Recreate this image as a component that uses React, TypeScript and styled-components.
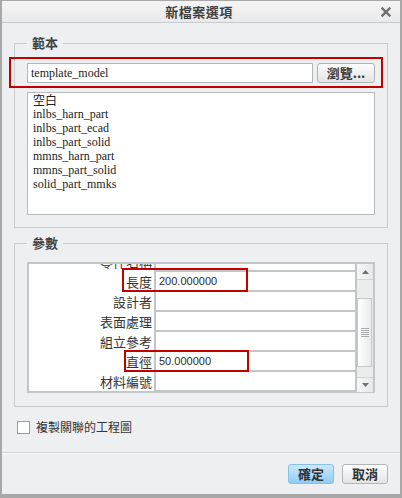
import React from "react";
import styled, { createGlobalStyle } from "styled-components";

const GlobalStyle = createGlobalStyle`
  html, body { margin: 0; padding: 0; background: #ffffff; }
  body { font-family: "Noto Sans CJK TC", "Liberation Sans", sans-serif; }
  * { box-sizing: border-box; }
`;

const Window = styled.div`
  width: 402px;
  height: 498px;
  display: flex;
  flex-direction: column;
  background: #eeeff1;
  border-style: solid;
  border-color: #a8a8a8;
  border-width: 1px 2px 4px 2px;
  overflow: hidden;
`;

const TitleBar = styled.div`
  flex: none;
  height: 22px;
  display: grid;
  grid-template-columns: 1fr auto 1fr;
  align-items: center;
  background: linear-gradient(#f4f4f5, #e9eaeb);
  border-bottom: 1px solid #c9cacc;
`;

const Title = styled.div`
  grid-column: 2;
  font: 700 13px/16px "Noto Sans CJK TC", sans-serif;
  color: #3e3e3e;
  letter-spacing: 0.5px;
  margin-right: 4px;
`;

const CloseButton = styled.div`
  grid-column: 3;
  justify-self: end;
  margin-right: 9px;
  width: 10px;
  height: 10px;
  display: flex;
`;

const Body = styled.div`
  flex: 1;
  display: flex;
  flex-direction: column;
  padding: 12px 12px 0;
`;

const Group = styled.fieldset<{ $padTop: number; $padBottom: number; $gapTop?: number }>`
  margin: ${(p) => p.$gapTop ?? 0}px 0 0;
  min-width: 0;
  border: 1px solid #c9cacc;
  padding: ${(p) => p.$padTop}px 12px ${(p) => p.$padBottom}px;
`;

const Legend = styled.legend`
  padding: 0 5px;
  font: 700 13px/16px "Noto Sans CJK TC", sans-serif;
  color: #404040;
`;

const TemplateRow = styled.div`
  position: relative;
  display: flex;
  gap: 4px;
  height: 20px;
`;

const Highlight = styled.div<{ $l: number; $t: number; $w?: number; $h?: number; $r?: number; $b?: number }>`
  position: absolute;
  left: ${(p) => p.$l}px;
  top: ${(p) => p.$t}px;
  ${(p) => (p.$w !== undefined ? `width: ${p.$w}px;` : `right: ${p.$r}px;`)}
  ${(p) => (p.$h !== undefined ? `height: ${p.$h}px;` : `bottom: ${p.$b}px;`)}
  border: 2px solid #c20000;
  pointer-events: none;
  z-index: 2;
`;

const PathInput = styled.div`
  flex: 1;
  height: 20px;
  border: 1px solid #b3b4b6;
  background: #ffffff;
  padding-left: 3px;
  font: 12px/18px "Liberation Serif", serif;
  color: #222222;
`;

const BrowseButton = styled.div`
  width: 58px;
  height: 20px;
  border: 1px solid #b2b2b2;
  border-radius: 3px;
  background: linear-gradient(#fdfdfd, #e2e3e4);
  display: flex;
  align-items: center;
  justify-content: center;
  font: 700 13px/16px "Noto Sans CJK TC", sans-serif;
  color: #3a3a3a;
`;

const TemplateList = styled.ul`
  margin: 9px 0 0;
  padding: 0 0 0 5px;
  list-style: none;
  height: 123px;
  border: 1px solid #b9babc;
  background: #ffffff;
  font: 12px/14px "Liberation Serif", "Noto Sans CJK TC", serif;
  color: #222222;
`;

const ListItem = styled.li<{ $cjk?: boolean }>`
  height: 14px;
  white-space: nowrap;
  ${(p) => (p.$cjk ? `font: 12px/14px "Noto Sans CJK TC", sans-serif;` : "")}
`;

const ParamTable = styled.div`
  display: flex;
  height: 131px;
  border: 2px solid #c4c5c7;
  background: #ffffff;
`;

const ParamBody = styled.div`
  flex: 1;
  position: relative;
  overflow: hidden;
`;

const ParamRows = styled.div`
  margin-top: -12px;
`;

const ParamRow = styled.div`
  position: relative;
  display: grid;
  grid-template-columns: 125px 1fr;
  height: 20px;
`;

const ParamLabel = styled.div`
  text-align: right;
  padding-right: 2px;
  font: 13px/19px "Noto Sans CJK TC", sans-serif;
  color: #333333;
  white-space: nowrap;
`;

const ParamValue = styled.div`
  border-left: 2px solid #c4c5c7;
  border-bottom: 2px solid #c4c5c7;
  padding-left: 3px;
  font: 11px/18px "Liberation Sans", sans-serif;
  color: #2a2a2a;
`;

const ScrollBar = styled.div`
  flex: none;
  width: 18px;
  border-left: 2px solid #c4c5c7;
  background: #ebecec;
  display: flex;
  flex-direction: column;
`;

const ScrollButton = styled.div<{ $down?: boolean }>`
  flex: none;
  height: ${(p) => (p.$down ? 15 : 16)}px;
  display: flex;
  align-items: center;
  justify-content: center;
  background: linear-gradient(90deg, #f6f6f6, #e8e8e9);
  ${(p) => (p.$down ? "border-top: 1px solid #d2d3d4;" : "border-bottom: 1px solid #d2d3d4;")}
`;

const ScrollTrack = styled.div<{ $h: number }>`
  flex: none;
  height: ${(p) => p.$h}px;
`;

const ScrollThumb = styled.div`
  flex: none;
  height: 69px;
  margin-right: 1px;
  border: 1px solid #c6c7c9;
  background: linear-gradient(90deg, #ffffff, #e9eaeb);
  display: flex;
  align-items: center;
  justify-content: center;
`;

const CheckRow = styled.label`
  display: flex;
  align-items: center;
  gap: 6px;
  margin: 13px 0 0 3px;
  font: 12px/14px "Noto Sans CJK TC", sans-serif;
  color: #333333;
`;

const CheckBox = styled.span`
  width: 13px;
  height: 13px;
  border: 1px solid #9c9c9c;
  background: #ffffff;
`;

const Footer = styled.div`
  flex: none;
  height: 42px;
  display: flex;
  justify-content: flex-end;
  align-items: flex-start;
  gap: 8px;
  padding: 11px 12px 0 0;
  border-top: 1px solid #d3d4d6;
  box-shadow: inset 0 1px 0 #f8f8f9;
`;

const DialogButton = styled.div<{ $primary?: boolean }>`
  width: 46px;
  height: 20px;
  border-radius: 3px;
  border: 1px solid ${(p) => (p.$primary ? "#86c1ea" : "#b4b5b7")};
  background: ${(p) =>
    p.$primary ? "linear-gradient(#cbe8fc, #8fcdf6)" : "linear-gradient(#fdfdfd, #e3e4e5)"};
  display: flex;
  align-items: center;
  justify-content: center;
  font: 700 13px/16px "Noto Sans CJK TC", sans-serif;
  color: #333333;
`;

const templates = [
  "inlbs_harn_part",
  "inlbs_part_ecad",
  "inlbs_part_solid",
  "mmns_harn_part",
  "mmns_part_solid",
  "solid_part_mmks",
];

type Param = { label: string; value: string; mark?: { l: number; t: number; w: number; h: number } };

const params: Param[] = [
  { label: "零件名稱", value: "" },
  { label: "長度", value: "200.000000", mark: { l: 93, t: -4, w: 126, h: 24 } },
  { label: "設計者", value: "" },
  { label: "表面處理", value: "" },
  { label: "組立參考", value: "" },
  { label: "直徑", value: "50.000000", mark: { l: 95, t: -2, w: 125, h: 22 } },
  { label: "材料編號", value: "" },
];

const Arrow = ({ down }: { down?: boolean }) => (
  <svg width="7" height="4" viewBox="0 0 7 4">
    <polygon points={down ? "0,0 7,0 3.5,4" : "3.5,0 7,4 0,4"} fill="#6e6e6e" />
  </svg>
);

const Grip = () => (
  <svg width="8" height="10" viewBox="0 0 8 10">
    {[0.5, 2.5, 4.5, 6.5, 8.5].map((y) => (
      <line key={y} x1="0" x2="8" y1={y} y2={y} stroke="#a9aaac" strokeWidth="1" />
    ))}
  </svg>
);

export default function App() {
  return (
    <>
      <GlobalStyle />
      <Window>
        <TitleBar>
          <Title>新檔案選項</Title>
          <CloseButton>
            <svg width="10" height="10" viewBox="0 0 10 10">
              <path d="M1.5 1.5 L8.5 8.5 M8.5 1.5 L1.5 8.5" stroke="#6f6f6f" strokeWidth="2.4" strokeLinecap="square" />
            </svg>
          </CloseButton>
        </TitleBar>
        <Body>
          <Group $padTop={12} $padBottom={12}>
            <Legend>範本</Legend>
            <TemplateRow>
              <Highlight $l={-18} $t={-6} $r={-8} $b={-5} />
              <PathInput>template_model</PathInput>
              <BrowseButton>瀏覽...</BrowseButton>
            </TemplateRow>
            <TemplateList>
              <ListItem $cjk>空白</ListItem>
              {templates.map((t) => (
                <ListItem key={t}>{t}</ListItem>
              ))}
            </TemplateList>
          </Group>
          <Group $padTop={11} $padBottom={13} $gapTop={7}>
            <Legend>參數</Legend>
            <ParamTable>
              <ParamBody>
                <ParamRows>
                  {params.map((p) => (
                    <ParamRow key={p.label}>
                      {p.mark && <Highlight $l={p.mark.l} $t={p.mark.t} $w={p.mark.w} $h={p.mark.h} />}
                      <ParamLabel>{p.label}</ParamLabel>
                      <ParamValue>{p.value}</ParamValue>
                    </ParamRow>
                  ))}
                </ParamRows>
              </ParamBody>
              <ScrollBar>
                <ScrollButton>
                  <Arrow />
                </ScrollButton>
                <ScrollTrack $h={18} />
                <ScrollThumb>
                  <Grip />
                </ScrollThumb>
                <ScrollTrack $h={10} />
                <ScrollButton $down>
                  <Arrow down />
                </ScrollButton>
              </ScrollBar>
            </ParamTable>
          </Group>
          <CheckRow>
            <CheckBox />
            複製關聯的工程圖
          </CheckRow>
        </Body>
        <Footer>
          <DialogButton $primary>確定</DialogButton>
          <DialogButton>取消</DialogButton>
        </Footer>
      </Window>
    </>
  );
}
